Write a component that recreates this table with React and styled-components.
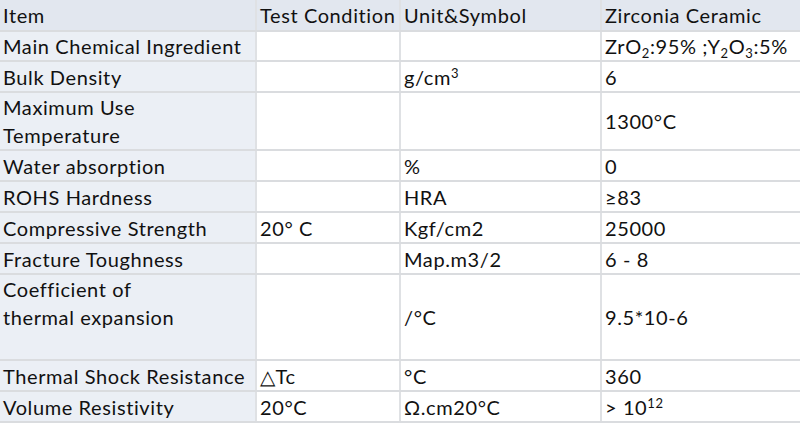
import React from "react";
import styled, { createGlobalStyle } from "styled-components";

const GlobalStyle = createGlobalStyle`
  html, body {
    margin: 0;
    padding: 0;
    background: #ffffff;
  }
`;

const Table = styled.table`
  width: 800px;
  border-collapse: collapse;
  table-layout: fixed;
  font-family: "Lato", "Open Sans", sans-serif;
  font-size: 20px;
  letter-spacing: 0.6px;
  color: #111111;
`;

const Row = styled.tr`
  height: ${(p) => p.$h}px;
`;

const Cell = styled.td`
  padding: 0 2px 0 3px;
  line-height: 28px;
  vertical-align: middle;
  white-space: nowrap;
  overflow: hidden;
  border-bottom: 2px solid #dadcdf;
  border-left: 2px solid #dfe1e4;
  background: ${(p) => (p.$head ? "#e2e7ef" : p.$first ? "#ebeff5" : "#ffffff")};

  &:first-child {
    border-left: 0;
  }
`;

const Sub = styled.sub`
  font-size: 0.65em;
  line-height: 0;
  vertical-align: -0.3em;
`;

const Sup = styled.sup`
  font-size: 0.65em;
  line-height: 0;
  vertical-align: 0.55em;
`;

const rows = [
  { h: 30, cells: ["Main Chemical Ingredient", "", "", (
    <>ZrO<Sub>2</Sub>:95% ;Y<Sub>2</Sub>O<Sub>3</Sub>:5%</>
  )] },
  { h: 31, cells: ["Bulk Density", "", <>g/cm<Sup>3</Sup></>, "6"] },
  { h: 58, cells: [<>Maximum Use<br />Temperature</>, "", "", "1300°C"] },
  { h: 31, cells: ["Water absorption", "", "%", "0"] },
  { h: 31, cells: ["ROHS Hardness", "", "HRA", "≥83"] },
  { h: 31, cells: ["Compressive Strength", "20° C", "Kgf/cm2", "25000"] },
  { h: 31, cells: ["Fracture Toughness", "", "Map.m3/2", "6 - 8"] },
  { h: 84, cells: [<>Coefficient of<br />thermal expansion<br />&nbsp;</>, "", "/°C", "9.5*10-6"] },
  { h: 31, cells: ["Thermal Shock Resistance", "△Tc", "°C", "360"] },
  { h: 31, cells: ["Volume Resistivity", "20°C", "Ω.cm20°C", <>&gt; 10<Sup>12</Sup></>] },
];

export default function App() {
  return (
    <>
      <GlobalStyle />
      <Table>
        <colgroup>
          <col style={{ width: 256 }} />
          <col style={{ width: 144 }} />
          <col style={{ width: 201 }} />
          <col style={{ width: 199 }} />
        </colgroup>
        <thead>
          <Row $h={31}>
            <Cell $head>Item</Cell>
            <Cell $head>Test Condition</Cell>
            <Cell $head>Unit&amp;Symbol</Cell>
            <Cell $head>Zirconia Ceramic</Cell>
          </Row>
        </thead>
        <tbody>
          {rows.map((r, i) => (
            <Row key={i} $h={r.h}>
              {r.cells.map((c, j) => (
                <Cell key={j} $first={j === 0}>
                  {c}
                </Cell>
              ))}
            </Row>
          ))}
        </tbody>
      </Table>
    </>
  );
}
